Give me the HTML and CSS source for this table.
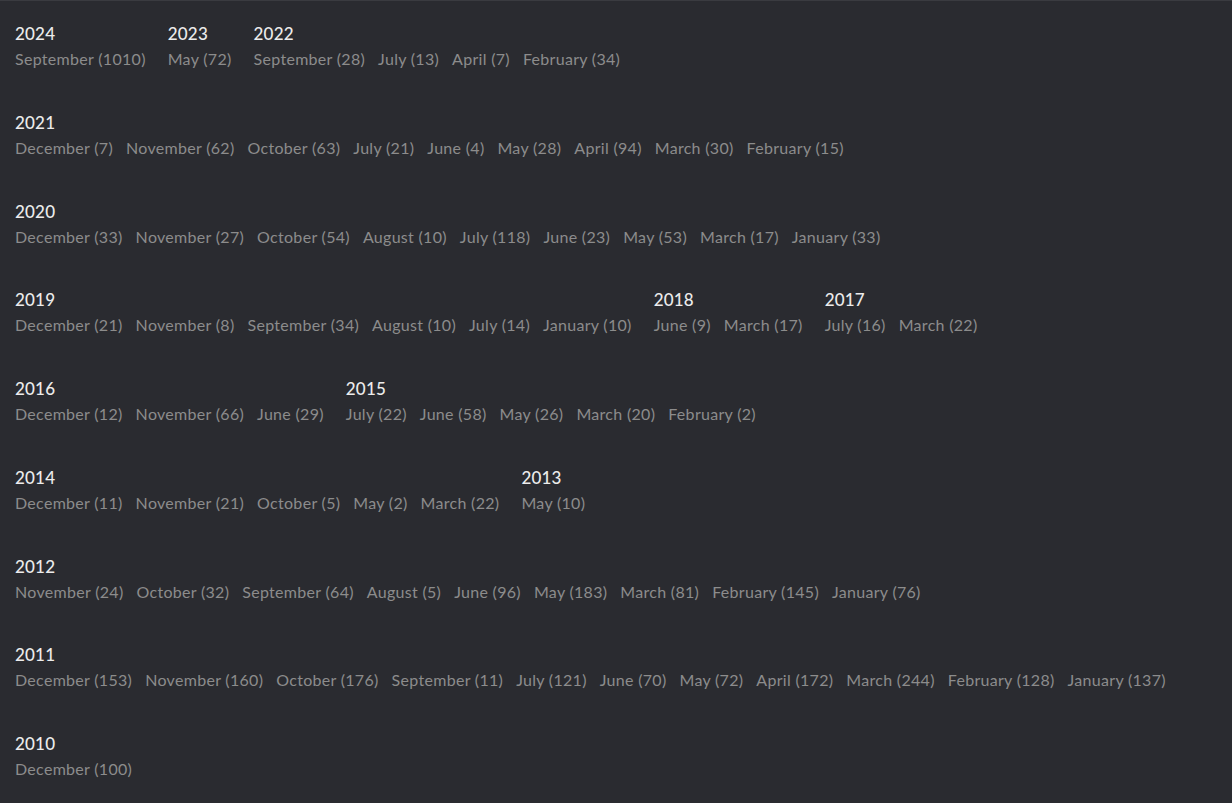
FILE: index.html
```html
<!DOCTYPE html>
<html>
<head>
    <meta charset="UTF-8" />
    <title>Archives</title>
    <link rel="stylesheet" href="styles.css">
</head>
<body>
    <div class="archive">
        <div class="row">
            <div class="year">
                <h3>2024</h3>
                <ul><li>September (1010)</li></ul>
            </div>
            <div class="year">
                <h3>2023</h3>
                <ul><li>May (72)</li></ul>
            </div>
            <div class="year">
                <h3>2022</h3>
                <ul><li>September (28)</li><li>July (13)</li><li>April (7)</li><li>February (34)</li></ul>
            </div>
        </div>
        <div class="row">
            <div class="year">
                <h3>2021</h3>
                <ul><li>December (7)</li><li>November (62)</li><li>October (63)</li><li>July (21)</li><li>June (4)</li><li>May (28)</li><li>April (94)</li><li>March (30)</li><li>February (15)</li></ul>
            </div>
        </div>
        <div class="row">
            <div class="year">
                <h3>2020</h3>
                <ul><li>December (33)</li><li>November (27)</li><li>October (54)</li><li>August (10)</li><li>July (118)</li><li>June (23)</li><li>May (53)</li><li>March (17)</li><li>January (33)</li></ul>
            </div>
        </div>
        <div class="row">
            <div class="year">
                <h3>2019</h3>
                <ul><li>December (21)</li><li>November (8)</li><li>September (34)</li><li>August (10)</li><li>July (14)</li><li>January (10)</li></ul>
            </div>
            <div class="year">
                <h3>2018</h3>
                <ul><li>June (9)</li><li>March (17)</li></ul>
            </div>
            <div class="year">
                <h3>2017</h3>
                <ul><li>July (16)</li><li>March (22)</li></ul>
            </div>
        </div>
        <div class="row">
            <div class="year">
                <h3>2016</h3>
                <ul><li>December (12)</li><li>November (66)</li><li>June (29)</li></ul>
            </div>
            <div class="year">
                <h3>2015</h3>
                <ul><li>July (22)</li><li>June (58)</li><li>May (26)</li><li>March (20)</li><li>February (2)</li></ul>
            </div>
        </div>
        <div class="row">
            <div class="year">
                <h3>2014</h3>
                <ul><li>December (11)</li><li>November (21)</li><li>October (5)</li><li>May (2)</li><li>March (22)</li></ul>
            </div>
            <div class="year">
                <h3>2013</h3>
                <ul><li>May (10)</li></ul>
            </div>
        </div>
        <div class="row">
            <div class="year">
                <h3>2012</h3>
                <ul><li>November (24)</li><li>October (32)</li><li>September (64)</li><li>August (5)</li><li>June (96)</li><li>May (183)</li><li>March (81)</li><li>February (145)</li><li>January (76)</li></ul>
            </div>
        </div>
        <div class="row">
            <div class="year">
                <h3>2011</h3>
                <ul><li>December (153)</li><li>November (160)</li><li>October (176)</li><li>September (11)</li><li>July (121)</li><li>June (70)</li><li>May (72)</li><li>April (172)</li><li>March (244)</li><li>February (128)</li><li>January (137)</li></ul>
            </div>
        </div>
        <div class="row">
            <div class="year">
                <h3>2010</h3>
                <ul><li>December (100)</li></ul>
            </div>
        </div>
    </div>
</body>
</html>
```

FILE: styles.css
```css
html, body {
    height: 100%;
}

body {
    margin: 0;
    background: #2a2b30;
    border-top: 1px solid #3a3b40;
    font-family: "Lato", "Liberation Sans", sans-serif;
}

.archive {
    padding: 20px 15px 0;
}

.row {
    display: flex;
    gap: 22px;
    height: 88.75px;
}

.year h3 {
    margin: 0;
    font-size: 17px;
    font-weight: 500;
    line-height: 25px;
    letter-spacing: 0.2px;
    color: #ececec;
}

.year ul {
    display: flex;
    gap: 13px;
    margin: 0;
    padding: 0;
    list-style: none;
}

.year li {
    font-size: 16px;
    line-height: 26px;
    letter-spacing: 0.3px;
    color: #8c8c8c;
}
```
